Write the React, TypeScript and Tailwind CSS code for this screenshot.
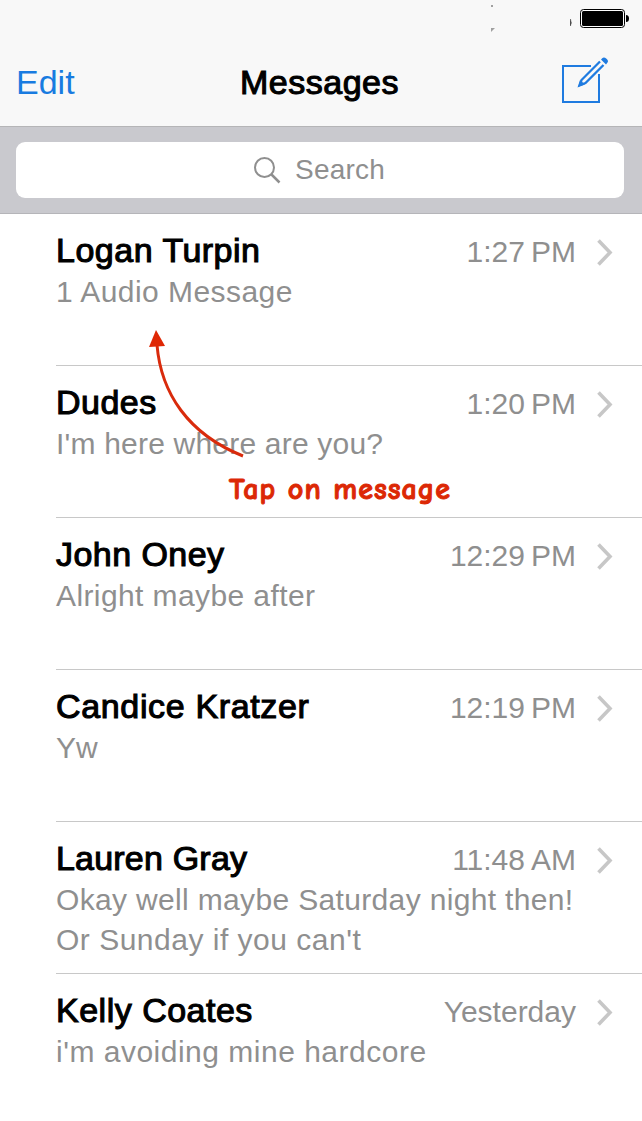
import React from 'react';

interface Conversation {
  name: string;
  nameClass: string;
  time: string;
  preview: string[];
  previewClass: string[];
}

const conversations: Conversation[] = [
  { name: 'Logan Turpin', nameClass: 'tracking-[0.5px]', time: '1:27\u2009PM', preview: ['1 Audio Message'], previewClass: ['tracking-[0.44px]'] },
  { name: 'Dudes', nameClass: 'tracking-[0.5px]', time: '1:20\u2009PM', preview: ["I'm here where are you?"], previewClass: ['tracking-[0.2px]'] },
  { name: 'John Oney', nameClass: 'tracking-[0.45px]', time: '12:29\u2009PM', preview: ['Alright maybe after'], previewClass: ['tracking-[0.4px]'] },
  { name: 'Candice Kratzer', nameClass: 'tracking-[0.65px]', time: '12:19\u2009PM', preview: ['Yw'], previewClass: ['tracking-[0px]'] },
  {
    name: 'Lauren Gray',
    nameClass: 'tracking-[0.2px]',
    time: '11:48\u2009AM',
    preview: ['Okay well maybe Saturday night then!', "Or Sunday if you can't"],
    previewClass: ['tracking-[0.34px]', 'tracking-[0.5px]'],
  },
  { name: 'Kelly Coates', nameClass: 'tracking-[0.5px]', time: 'Yesterday', preview: ["i'm avoiding mine hardcore"], previewClass: ['tracking-[0.5px]'] },
];

const StatusIcons = () => (
  <svg width="140" height="28" viewBox="490 4 140 28" className="block">
    <path d="M491 5h2v2h-2ZM491 28h4l-4 4Z" fill="#a0a0a0" />
    <path d="M570.500 19q1.500 3.500 0 7Z" stroke="#000" strokeWidth=".3" />
    <rect x="580.500" y="9.500" width="44" height="18" rx="3" fill="#fff" stroke="#000" />
    <rect x="582" y="11" width="41" height="15" rx="1.500" />
    <path d="M626 15q3 0 3 3.500t-3 3.500Z" />
  </svg>
);

const ComposeIcon = () => (
  <svg width="48" height="48" viewBox="560 56 48 48" fill="none" className="block">
    <path d="M591 66h-28v36h36V74" stroke="#1f7be0" strokeWidth="2" />
    <path d="m600 61.500-18.500 18.500-1.500 5 5.500-2L603.500 65" stroke="#1f7be0" strokeWidth="2.300" />
    <path d="m601 59.500 1.500-1.500q1.500-1.500 4 .800t.800 4L606 64.500Z" fill="#1f7be0" />
    <path d="m580 80-2.500 7.500 7.500-3Z" fill="#1f7be0" />
  </svg>
);

const Chevron = () => (
  <svg width="18" height="30" viewBox="0 0 18 30" fill="none" className="block">
    <path d="m2.500 3.500 11.500 12-11.500 12" stroke="#c7c7c7" strokeWidth="3.600" />
  </svg>
);

const ConversationRow = ({ item, last }: { item: Conversation; last: boolean }) => (
  <div className={last ? 'ml-14 h-[147px] pt-[15px]' : 'ml-14 h-[152px] border-b border-[#c8c8c8] pt-[15px]'}>
    <div className="flex h-[43px] items-start justify-between pr-7">
      <span className={`text-[34px] leading-[42px] [-webkit-text-stroke:1.1px_black] ${item.nameClass}`}>{item.name}</span>
      <div className="flex items-center gap-5 pt-[3px] text-[#8f8f8f]">
        <span className="text-[30px] leading-10">{item.time}</span>
        <Chevron />
      </div>
    </div>
    {item.preview.map((line, i) => (
      <p key={line} className={`text-[30px] leading-10 text-[#8f8f8f] ${item.previewClass[i]}`}>{line}</p>
    ))}
  </div>
);

export default function App() {
  return (
    <div className="relative h-[1121px] w-[642px] overflow-hidden whitespace-nowrap bg-white font-['Liberation_Sans',Arial,sans-serif] text-black">
      <header className="h-[127px] border-b border-[#b5b5b7] bg-[#f8f8f8]">
        <div className="flex h-10 justify-end pr-3 pt-1">
          <StatusIcons />
        </div>
        <div className="flex items-center justify-between pl-4 pr-[34px] pt-4">
          <span className="w-[58px] pt-1 text-[34px] leading-10 text-[#187be0]">Edit</span>
          <h1 className="pl-[5px] pt-1 text-[34px] leading-10 tracking-[0.5px] [-webkit-text-stroke:1.1px_black]">Messages</h1>
          <ComposeIcon />
        </div>
      </header>

      <div className="h-[87px] border-b border-[#b5b5b9] bg-[#c9c9ce] px-4 pt-[15px]">
        <div className="flex h-14 w-[608px] items-center justify-center gap-[13px] rounded-[9px] bg-white pr-[3px] text-[#8f8f8f]">
          <svg width="30" height="30" viewBox="0 0 30 30" fill="none" stroke="currentColor" strokeWidth="2">
            <circle cx="12.500" cy="12.500" r="9.500" />
            <path d="m19 19 8.500 8.500" strokeWidth="2.500" />
          </svg>
          <span className="text-[28px] leading-10 tracking-[0.2px]">Search</span>
        </div>
      </div>

      <main>
        {conversations.map((item, i) => (
          <ConversationRow key={item.name} item={item} last={i === conversations.length - 1} />
        ))}
      </main>

      {/* Callout over the list */}
      <svg className="absolute left-[140px] top-[325px]" width="120" height="140" viewBox="140 325 120 140">
        <path d="M157 345C161 393 188 434 243 456" fill="none" stroke="#d92b0c" strokeWidth="3" />
        <path d="m156 330-7 17 16-1Z" fill="#df2704" />
      </svg>
      <span className="absolute left-[229px] top-[470px] text-[30px] font-bold leading-10 tracking-[1px] text-[#dc2805] [-webkit-text-stroke:1px_#dc2805] font-['Chalkboard_SE','Comic_Sans_MS','Comic_Neue',Lato,sans-serif]">
        Tap on message
      </span>
    </div>
  );
}
